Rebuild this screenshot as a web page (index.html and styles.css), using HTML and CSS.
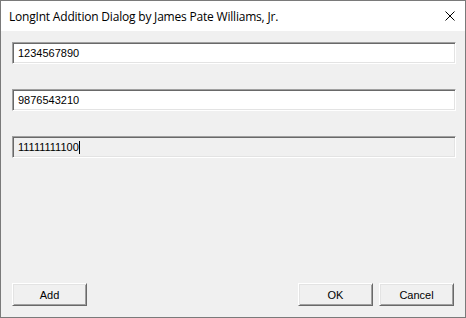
FILE: index.html
```html
<!DOCTYPE html>
<html>
<head>
<meta charset="utf-8">
<link rel="stylesheet" href="styles.css">
</head>
<body>
<div class="window">
  <div class="titlebar">
    <span class="title">LongInt Addition Dialog by James Pate Williams, Jr.</span>
    <span class="close">
      <svg width="10" height="10" viewBox="0 0 10 10"><path d="M0.5 0.5 L9.5 9.5 M9.5 0.5 L0.5 9.5" stroke="#000" stroke-width="1" fill="none"/></svg>
    </span>
  </div>
  <div class="content">
    <div class="fields">
      <div class="edit">1234567890</div>
      <div class="edit">9876543210</div>
      <div class="edit readonly">11111111100<span class="caret"></span></div>
    </div>
    <div class="buttons">
      <button class="btn">Add</button>
      <div class="spacer"></div>
      <button class="btn">OK</button>
      <button class="btn">Cancel</button>
    </div>
  </div>
</div>
</body>
</html>
```

FILE: styles.css
```css
html, body {
  margin: 0;
  padding: 0;
  background: #f0f0f0;
}
.window {
  width: 466px;
  height: 318px;
  box-sizing: border-box;
  border: 1px solid #7a7a7a;
  background: #f0f0f0;
  display: flex;
  flex-direction: column;
}
.titlebar {
  height: 30px;
  background: #ffffff;
  display: flex;
  align-items: center;
  padding-left: 8px;
  flex-shrink: 0;
}
.title {
  font-family: "Open Sans", "Noto Sans", sans-serif;
  font-size: 12px;
  letter-spacing: -0.2px;
  color: #000;
  flex: 1;
  white-space: nowrap;
}
.close {
  width: 10px;
  height: 10px;
  margin-right: 10px;
  display: flex;
}
.content {
  flex: 1;
  display: flex;
  flex-direction: column;
  padding: 11px 9px 11px 11px;
}
.fields {
  display: flex;
  flex-direction: column;
  gap: 25px;
}
.edit {
  height: 22px;
  box-sizing: border-box;
  border: 1px solid;
  border-color: #a0a0a0 #ffffff #ffffff #a0a0a0;
  box-shadow: inset 1px 1px 0 #696969, inset -1px -1px 0 #e3e3e3;
  background: #ffffff;
  font-family: "Liberation Sans", Arial, sans-serif;
  font-size: 11px;
  line-height: 20px;
  padding-left: 5px;
  color: #000;
  display: flex;
  align-items: center;
}
.edit.readonly {
  background: #f0f0f0;
}
.caret {
  display: inline-block;
  width: 1px;
  height: 13px;
  background: #000;
}
.buttons {
  margin-top: auto;
  display: flex;
  gap: 6px;
}
.spacer {
  flex: 1;
}
.btn {
  width: 75px;
  height: 23px;
  box-sizing: border-box;
  margin: 0;
  padding: 0;
  border: 1px solid;
  border-color: #ffffff #696969 #696969 #ffffff;
  box-shadow: inset 1px 1px 0 #e3e3e3, inset -1px -1px 0 #a0a0a0;
  background: #f0f0f0;
  font-family: "Liberation Sans", Arial, sans-serif;
  font-size: 11px;
  color: #000;
  border-radius: 0;
}
.buttons .btn:last-child {
  margin-right: 2px;
}
```
